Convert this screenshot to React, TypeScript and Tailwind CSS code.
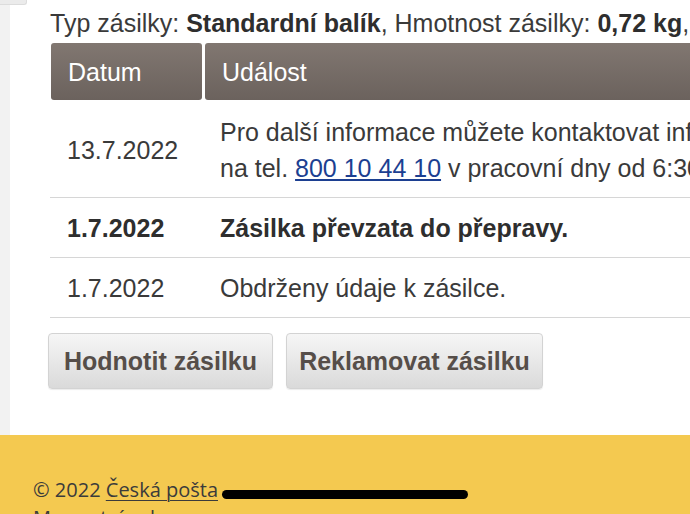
import React from "react";

export default function App() {
  return (
    <div
      className="relative w-[690px] h-[514px] overflow-hidden bg-white flex flex-col"
      style={{ fontFamily: '"Liberation Sans", Arial, sans-serif' }}
    >
      <div className="flex h-[435px] shrink-0">
        <div className="w-[10px] shrink-0 bg-[#f2f2f2] relative">
          <div className="absolute left-0 top-0 w-[27px] h-[5px] bg-[#ebebeb] border-r border-b border-[#dcdcdc] rounded-br-[3px]" />
        </div>
        <div className="flex-1 min-w-0 pl-[40px] pt-[5px] text-[25px] leading-[36px] text-[#3a3a3a]">
          <div className="whitespace-nowrap">
            Typ zásilky: <b className="text-[#2e2e2e]">Standardní balík</b>, Hmotnost zásilky:{" "}
            <b className="text-[#2e2e2e]">0,72 kg</b>, Rozměry zásilky
          </div>
          <div className="mt-[2px] w-[900px]">
            <div className="flex gap-[3px] pl-[1px]">
              <div className="w-[151px] h-[57px] shrink-0 rounded-[3px] bg-gradient-to-b from-[#817771] to-[#6b625d] text-white flex items-center pl-[17px]">
                Datum
              </div>
              <div className="flex-1 h-[57px] rounded-[3px] bg-gradient-to-b from-[#817771] to-[#6b625d] text-white flex items-center pl-[17px]">
                Událost
              </div>
            </div>
            <div className="flex border-b border-[#d6d6d6] pt-[14px] pb-[11px]">
              <div className="w-[155px] shrink-0 pl-[17px] flex items-center">13.7.2022</div>
              <div className="flex-1 pl-[15px] whitespace-nowrap">
                Pro další informace můžete kontaktovat infolinku České pošty
                <br />
                na tel.{" "}
                <a className="text-[#1c3f91] underline underline-offset-[2px]" href="#">
                  800 10 44 10
                </a>{" "}
                v pracovní dny od 6:30 do 18:00 hodin.
              </div>
            </div>
            <div className="flex border-b border-[#d6d6d6] pt-[12px] pb-[11px] font-bold text-[#2e2e2e]">
              <div className="w-[155px] shrink-0 pl-[17px]">1.7.2022</div>
              <div className="flex-1 pl-[15px] whitespace-nowrap">Zásilka převzata do přepravy.</div>
            </div>
            <div className="flex border-b border-[#d6d6d6] pt-[12px] pb-[11px]">
              <div className="w-[155px] shrink-0 pl-[17px]">1.7.2022</div>
              <div className="flex-1 pl-[15px] whitespace-nowrap">Obdrženy údaje k zásilce.</div>
            </div>
          </div>
          <div className="flex gap-[13px] mt-[15px] -ml-[2px]">
            <button className="w-[225px] h-[56px] rounded-[4px] border border-[#d3d3d3] bg-gradient-to-b from-[#f6f6f6] to-[#dadada] font-bold text-[#564e49] text-[25px] leading-[36px] shadow-[0_1px_1px_rgba(0,0,0,0.08)]">
              Hodnotit zásilku
            </button>
            <button className="w-[257px] h-[56px] rounded-[4px] border border-[#d3d3d3] bg-gradient-to-b from-[#f6f6f6] to-[#dadada] font-bold text-[#564e49] text-[25px] leading-[36px] shadow-[0_1px_1px_rgba(0,0,0,0.08)]">
              Reklamovat zásilku
            </button>
          </div>
        </div>
      </div>
      <footer
        className="flex-1 bg-[#f4c950] pl-[33px] pt-[41px] text-[20px] leading-[28px] text-[#3b3b3b]"
        style={{ fontFamily: '"Open Sans", "Noto Sans", sans-serif' }}
      >
        <div>
          © 2022{" "}
          <a href="#" className="underline underline-offset-[3px] decoration-1">
            Česká pošta
          </a>
        </div>
        <div>Mapa stránek</div>
      </footer>
      <div className="absolute left-[222px] top-[490px] w-[246px] h-[9px] rounded-full bg-black" />
    </div>
  );
}
